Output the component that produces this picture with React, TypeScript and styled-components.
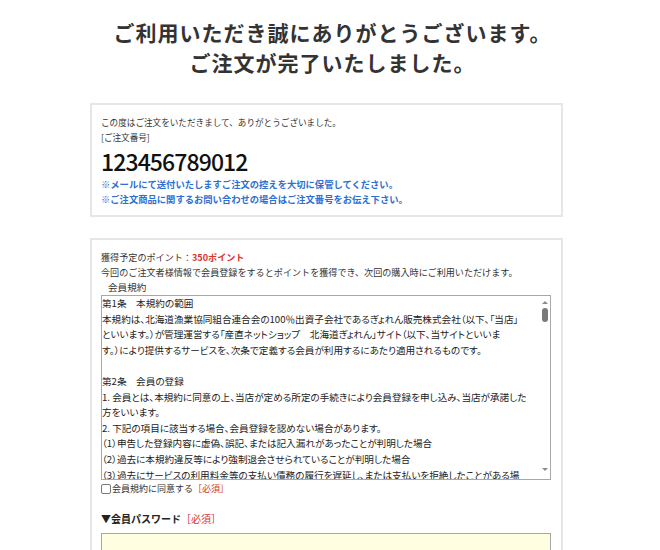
import styled, { createGlobalStyle } from 'styled-components';

const GlobalStyle = createGlobalStyle`
  html, body {
    margin: 0;
    padding: 0;
    background: #fff;
  }
  body {
    font-family: "Noto Sans CJK JP", "Noto Sans", sans-serif;
    color: #333;
  }
`;

const TERMS = [
  '第1条　本規約の範囲',
  '本規約は、北海道漁業協同組合連合会の100％出資子会社であるぎょれん販売株式会社（以下、「当店」',
  'といいます。）が管理運営する「産直ネットショップ　北海道ぎょれん」サイト（以下、当サイトといいま',
  'す。）により提供するサービスを、次条で定義する会員が利用するにあたり適用されるものです。',
  '',
  '第2条　会員の登録',
  '1. 会員とは、本規約に同意の上、当店が定める所定の手続きにより会員登録を申し込み、当店が承諾した',
  '方をいいます。',
  '2. 下記の項目に該当する場合、会員登録を認めない場合があります。',
  '（1）申告した登録内容に虚偽、誤記、または記入漏れがあったことが判明した場合',
  '（2）過去に本規約違反等により強制退会させられていることが判明した場合',
  '（3）過去にサービスの利用料金等の支払い債務の履行を遅延し、または支払いを拒絶したことがある場',
  '合',
].join('\n');

const Page = styled.main`
  padding: 17px 0 0;
`;

const Title = styled.h1`
  margin: 0 0 26px;
  padding-left: 5px;
  text-align: center;
  font-size: 21px;
  line-height: 30px;
  font-weight: 700;
  letter-spacing: 1px;
  color: #333;
`;

const Panel = styled.section<{ $gap?: number }>`
  box-sizing: border-box;
  width: 473px;
  margin: ${(p) => p.$gap ?? 0}px 0 0 90px;
  border: 2px solid #e6e6e6;
  padding: 10px 9px 9px 9px;
`;

const Text = styled.p<{ $size?: number }>`
  margin: 0;
  font-size: ${(p) => p.$size ?? 9}px;
  line-height: 14.5px;
  color: #333;
`;

const OrderNo = styled.div`
  margin-top: 4px;
  font-size: 23px;
  line-height: 26px;
  font-weight: 500;
  color: #111;
  letter-spacing: -0.9px;
`;

const Notes = styled.div`
  margin-top: 3px;
`;

const Note = styled.p`
  margin: 0;
  font-size: 9.3px;
  line-height: 14.5px;
  font-weight: 700;
  color: #2d6fd2;
`;

const Red = styled.span<{ $bold?: boolean }>`
  color: #d8352c;
  font-weight: ${(p) => (p.$bold ? 700 : 400)};
`;

const SubLabel = styled.p`
  margin: 1px 0 0 7px;
  font-size: 9.6px;
  line-height: 15px;
  color: #333;
`;

const TermsBox = styled.div`
  display: flex;
  height: 185px;
  box-sizing: border-box;
  margin-right: 1px;
  border: 1px solid #a8a8a8;
  background: #fff;
`;

const TermsText = styled.div`
  flex: 1;
  min-width: 0;
  overflow-y: auto;
  overflow-x: hidden;
  scrollbar-width: none;
  white-space: pre-wrap;
  font-size: 9.6px;
  line-height: 15.6px;
  font-feature-settings: "palt";
  color: #222;
  &::-webkit-scrollbar {
    display: none;
  }
`;

const ScrollTrack = styled.div`
  width: 11px;
  flex: none;
  display: flex;
  flex-direction: column;
  align-items: center;
`;

const Arrow = styled.span<{ $down?: boolean }>`
  width: 0;
  height: 0;
  border-left: 3px solid transparent;
  border-right: 3px solid transparent;
  ${(p) => (p.$down ? 'border-top: 3px solid #8a8a8a;' : 'border-bottom: 3px solid #8a8a8a;')}
  margin: ${(p) => (p.$down ? '0 0 8px' : '5px 0 0')};
`;

const Thumb = styled.span`
  width: 6px;
  height: 14px;
  margin-top: 4px;
  border-radius: 3px;
  background: #7a7a7a;
`;

const Spacer = styled.span`
  flex: 1;
`;

const AgreeRow = styled.label`
  display: flex;
  align-items: center;
  height: 15px;
  margin-top: 1px;
  font-size: 9px;
  line-height: 15px;
  color: #333;
`;

const Box = styled.span`
  width: 10px;
  height: 10px;
  box-sizing: border-box;
  border: 1px solid #777;
  border-radius: 2px;
  background: #fff;
  margin-right: 1px;
`;

const FieldHead = styled.h3`
  margin: 15px 0 0;
  font-size: 10px;
  line-height: 16px;
  font-weight: 700;
  color: #222;
`;

const Input = styled.div`
  margin: 6px 1px 0 0;
  height: 40px;
  border: 1px solid #a8a8a8;
  background: #fffee0;
`;

export default function App() {
  return (
    <Page>
      <GlobalStyle />
      <Title>
        ご利用いただき誠にありがとうございます。
        <br />
        ご注文が完了いたしました。
      </Title>

      <Panel>
        <Text $size={8.6}>この度はご注文をいただきまして、ありがとうございました。</Text>
        <Text $size={8.6}>[ご注文番号]</Text>
        <OrderNo>123456789012</OrderNo>
        <Notes>
          <Note>※メールにて送付いたしますご注文の控えを大切に保管してください。</Note>
          <Note>※ご注文商品に関するお問い合わせの場合はご注文番号をお伝え下さい。</Note>
        </Notes>
      </Panel>

      <Panel $gap={21}>
        <Text $size={9.1}>
          獲得予定のポイント：<Red $bold>350ポイント</Red>
        </Text>
        <Text $size={9.1}>今回のご注文者様情報で会員登録をするとポイントを獲得でき、次回の購入時にご利用いただけます。</Text>
        <SubLabel>会員規約</SubLabel>
        <TermsBox>
          <TermsText>{TERMS}</TermsText>
          <ScrollTrack>
            <Arrow />
            <Thumb />
            <Spacer />
            <Arrow $down />
          </ScrollTrack>
        </TermsBox>
        <AgreeRow>
          <Box />
          会員規約に同意する<Red>［必須］</Red>
        </AgreeRow>
        <FieldHead>
          ▼会員パスワード<Red>［必須］</Red>
        </FieldHead>
        <Input />
      </Panel>
    </Page>
  );
}
